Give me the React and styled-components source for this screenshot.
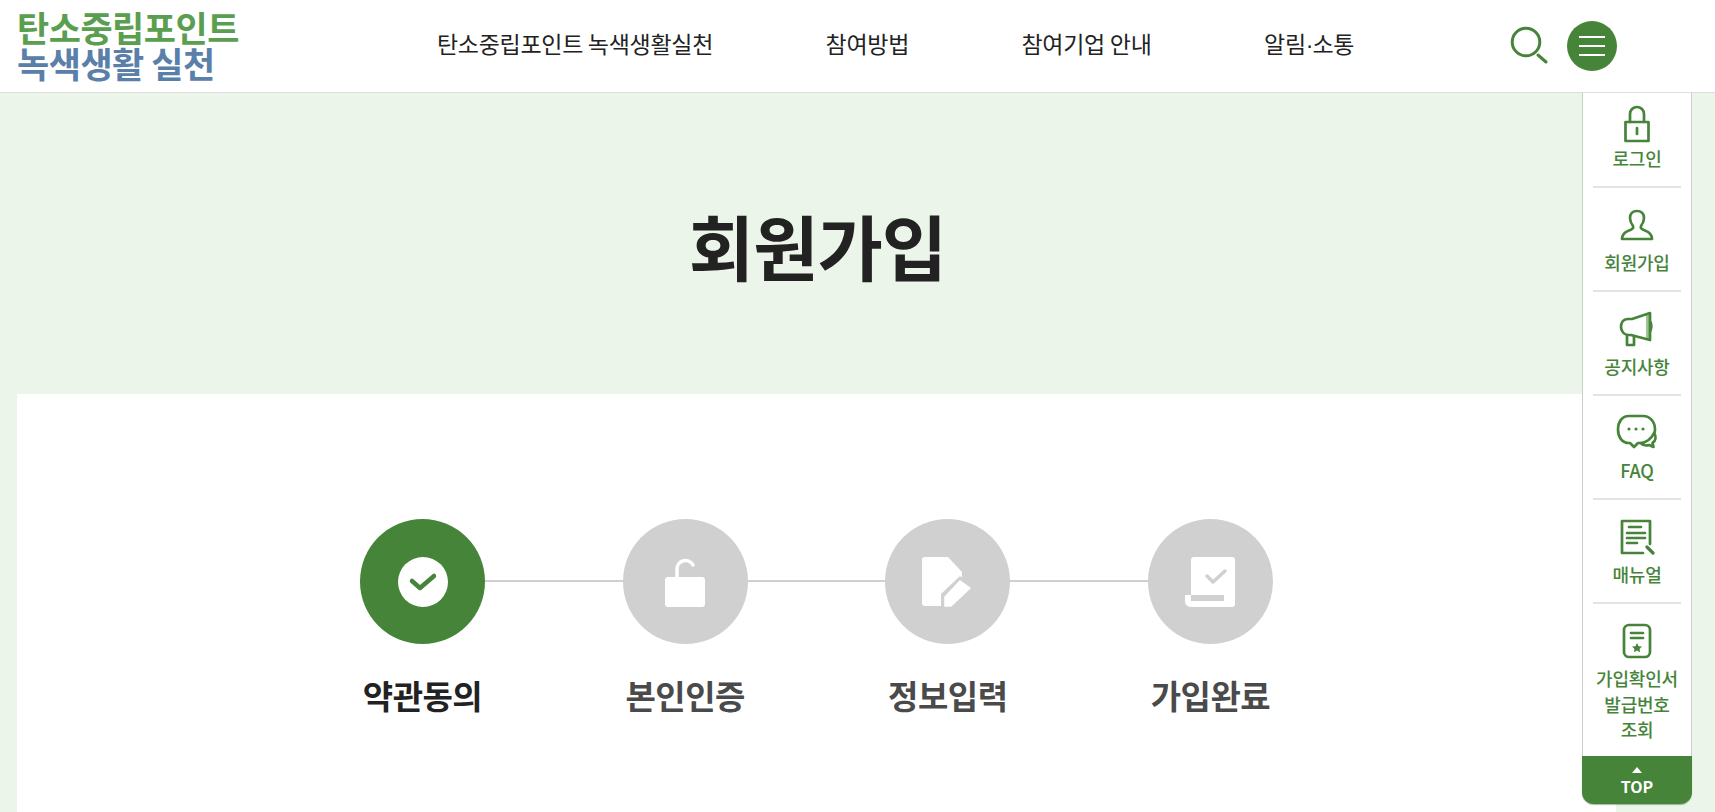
import React from "react";
import styled, { createGlobalStyle } from "styled-components";

const GREEN = "#46843a";
const GREY = "#d0d0d0";

const GlobalStyle = createGlobalStyle`
  html, body {
    margin: 0;
    padding: 0;
    height: 812px;
    overflow: hidden;
    background: #fff;
    font-family: "Noto Sans CJK KR", "Noto Sans", sans-serif;
  }
  * { box-sizing: border-box; }
`;

const Page = styled.div`
  position: relative;
  width: 1715px;
  height: 812px;
  overflow: hidden;
  background: #ebf5e9;
`;

const Header = styled.header`
  display: flex;
  align-items: center;
  height: 93px;
  padding: 0 98px 0 17px;
  background: #fff;
  border-bottom: 1px solid #dcdedb;
`;

const Logo = styled.div`
  width: 420px;
  margin-top: -2px;
  font-size: 35px;
  font-weight: 700;
  line-height: 36px;
  letter-spacing: -0.5px;
`;

const LogoLine = styled.div`
  color: ${props => props.color};
  white-space: nowrap;
`;

const Nav = styled.nav`
  display: flex;
  gap: 112.5px;
  margin-top: -6px;
  font-size: 23px;
  color: #222;
  letter-spacing: -0.3px;
  white-space: nowrap;
`;

const NavDot = styled.span`
  font-family: "Liberation Sans", sans-serif;
  letter-spacing: -1px;
`;

const Tools = styled.div`
  display: flex;
  align-items: center;
  margin-left: auto;
  gap: 19px;
`;

const SearchButton = styled.div`
  display: flex;
  width: 38px;
  height: 40px;
`;

const MenuButton = styled.div`
  display: flex;
  flex-direction: column;
  align-items: center;
  justify-content: center;
  gap: 7px;
  width: 50px;
  height: 50px;
  border-radius: 50%;
  background: ${GREEN};
`;

const MenuLine = styled.span`
  width: 26px;
  height: 2px;
  background: #fff;
`;

const Hero = styled.section`
  display: flex;
  justify-content: center;
  align-items: center;
  height: 301px;
  padding: 0 80px 0 0;
`;

const Title = styled.h1`
  margin: 0;
  font-size: 71px;
  font-weight: 700;
  letter-spacing: -1px;
  color: #222;
`;

const Card = styled.main`
  width: 1599px;
  height: 500px;
  margin-left: 17px;
  padding-top: 125px;
  background: #fff;
`;

const Stepper = styled.div`
  display: flex;
  justify-content: center;
  align-items: flex-start;
`;

const Step = styled.div`
  display: flex;
  flex-direction: column;
  align-items: center;
  width: 125px;
`;

const Circle = styled.div`
  display: flex;
  align-items: center;
  justify-content: center;
  width: 125px;
  height: 125px;
  border-radius: 50%;
  background: ${props => props.active ? GREEN : GREY};
`;

const Connector = styled.div`
  width: 137.67px;
  height: 2px;
  margin-top: 61px;
  background: ${GREY};
`;

const StepLabel = styled.div`
  margin-top: 28px;
  font-size: 33px;
  font-weight: 700;
  line-height: 46px;
  letter-spacing: -0.5px;
  white-space: nowrap;
  color: ${props => props.active ? "#222" : "#4a4a4a"};
`;

const Side = styled.aside`
  position: absolute;
  top: 93px;
  left: 1582px;
  width: 110px;
  height: 711px;
  display: flex;
  flex-direction: column;
  background: #fff;
  border: solid #c9d0c8;
  border-width: 0 1px;
  border-radius: 0 0 12px 12px;
`;

const SideItem = styled.a`
  display: flex;
  flex-direction: column;
  align-items: center;
  height: ${props => props.h}px;
  margin: 0 10px;
  padding-top: ${props => props.pt}px;
  border-bottom: ${props => props.last ? "none" : "2px solid #e2e4e2"};
  color: ${GREEN};
`;

const SideIcon = styled.div`
  display: flex;
  align-items: center;
  justify-content: center;
  height: 38px;
`;

const SideLabel = styled.div`
  margin-top: ${props => props.gap}px;
  font-size: 18px;
  font-weight: 500;
  line-height: 25.5px;
  letter-spacing: -0.2px;
  text-align: center;
  white-space: nowrap;
`;

const TopButton = styled.div`
  display: flex;
  flex-direction: column;
  align-items: center;
  height: 48px;
  margin: auto -1px 0;
  padding-top: 11px;
  background: ${GREEN};
  color: #fff;
  font-size: 16px;
  font-weight: 700;
  line-height: 20px;
  border-radius: 0 0 12px 12px;
  box-shadow: 0 1px 1px rgba(40, 80, 30, 0.4);
`;

const TopArrow = styled.span`
  width: 0;
  height: 0;
  margin-bottom: 3px;
  border: solid transparent;
  border-width: 0 5px 6px;
  border-bottom-color: #fff;
`;

const line = { fill: "none", stroke: GREEN, strokeWidth: 2.7, strokeLinecap: "round", strokeLinejoin: "round" };

const SearchIcon = () => (
  <svg width="38" height="40" viewBox="0 0 38 40">
    <circle cx="16" cy="16" r="13.8" fill="none" stroke={GREEN} strokeWidth="3" />
    <path d="M28 29l8 7" fill="none" stroke={GREEN} strokeWidth="3" strokeLinecap="round" />
  </svg>
);

const LockIcon = () => (
  <svg width="28" height="38" viewBox="0 0 28 38">
    <g {...line}>
      <rect x="2.5" y="17" width="23" height="19" />
      <path d="M7 17V9a7 7 0 0 1 14 0v8" />
      <path d="M14 23v6" />
    </g>
  </svg>
);

const PersonIcon = () => (
  <svg width="34" height="32" viewBox="0 0 34 32">
    <path {...line} d="M17 2c-4.500 0-7 3-7 7 0 3 1.500 6 3 8 1 2-1 3.500-4 4.500C5 23 2 25 2 30h30c0-5-3-7-7-8.500-3-1-5-2.500-4-4.500 1.500-2 3-5 3-8 0-4-2.500-7-7-7z" />
  </svg>
);

const MegaphoneIcon = () => (
  <svg width="36" height="36" viewBox="0 0 36 36">
    <path d="M27 4v23l4 2V2z" fill="#9cc391" />
    <path d="M31 9c3.500 1 3.500 11 0 13z" fill={GREEN} />
    <g {...line}>
      <path d="M31 2L13 8H9C4 8 2 12 2 16s3 8 7 8h3l19 5z" />
      <path d="M8 24v10h7V25" />
    </g>
  </svg>
);

const ChatIcon = () => (
  <svg width="42" height="38" viewBox="0 0 42 38">
    <g {...line}>
      <path d="M38 20c.8-1.500 1-3 1-4.500C39 8 34 2 27 2H13C6 2 2 8 2 15.500S6 29 13 29h1l4 4 4-4h2" />
      <path d="M38 19c2.500 3 2 8-1.500 10l1 4-4.500-2c-3 1-6.500 0-8.500-2 5 0 11-4 13.500-10z" />
    </g>
    <g fill={GREEN}>
      <circle cx="13" cy="15" r="1.600" />
      <circle cx="20" cy="15" r="1.600" />
      <circle cx="27" cy="15" r="1.600" />
    </g>
  </svg>
);

const ManualIcon = () => (
  <svg width="36" height="36" viewBox="0 0 36 36">
    <g {...line}>
      <path d="M31 25V2H3v32h21" />
      <path d="M28 28l6 6" strokeWidth="3.200" />
      <path d="M10 8h12M8 14h18M8 19h18M8 24h10" />
    </g>
  </svg>
);

const ConfirmIcon = () => (
  <svg width="30" height="36" viewBox="0 0 30 36">
    <g {...line}>
      <rect x="2" y="2" width="26" height="32" rx="5" />
      <path d="M9 10h12M9 15h12" />
    </g>
    <path d="M15 20l1.600 3.200 3.400.4-2.500 2.300.7 3.400-3.200-1.700-3.200 1.700.7-3.400-2.500-2.300 3.400-.4z" fill={GREEN} />
  </svg>
);

const CheckStep = () => (
  <svg width="50" height="50" viewBox="0 0 50 50">
    <circle cx="25" cy="25" r="25" fill="#fff" />
    <path d="M14 24l8 7 14-12" fill="none" stroke={GREEN} strokeWidth="4.500" strokeLinecap="round" strokeLinejoin="round" />
  </svg>
);

const OpenLockStep = () => (
  <svg width="44" height="52" viewBox="0 0 44 52">
    <rect x="2" y="21" width="40" height="30" rx="3" fill="#fff" />
    <path d="M14 22v-9a8.500 8.500 0 0 1 16-4" fill="none" stroke="#fff" strokeWidth="3.500" strokeLinecap="round" />
  </svg>
);

const DocStep = () => (
  <svg width="54" height="52" viewBox="0 0 54 52">
    <path d="M4 1h23l14 15v16L22 50H4a3 3 0 0 1-3-3V4a3 3 0 0 1 3-3z" fill="#fff" />
    <path d="M20 52V38L39 20l15 12-21 20z" fill={GREY} />
    <path d="M24 50v-9L39 25l10 7-19 18z" fill="#fff" stroke="#fff" strokeWidth="1.500" strokeLinejoin="round" />
  </svg>
);

const ScrollStep = () => (
  <svg width="50" height="52" viewBox="0 0 50 52">
    <path d="M9 1h38a3 3 0 0 1 3 3v44a3 3 0 0 1-3 3H7c-4 0-7-2-7-6v-6h6V4a3 3 0 0 1 3-3z" fill="#fff" />
    <path d="M6 39h33v6H6z" fill={GREY} />
    <path d="M22 20l6 6 12-11" fill="none" stroke={GREY} strokeWidth="3.500" strokeLinecap="round" strokeLinejoin="round" />
  </svg>
);

const steps = [
  { label: "약관동의", icon: <CheckStep />, active: true },
  { label: "본인인증", icon: <OpenLockStep /> },
  { label: "정보입력", icon: <DocStep /> },
  { label: "가입완료", icon: <ScrollStep /> },
];

const sideLinks = [
  { label: ["로그인"], icon: <LockIcon />, h: 95, pt: 12, gap: 3 },
  { label: ["회원가입"], icon: <PersonIcon />, h: 104, pt: 18, gap: 6 },
  { label: ["공지사항"], icon: <MegaphoneIcon />, h: 104, pt: 18, gap: 6 },
  { label: ["FAQ"], icon: <ChatIcon />, h: 104, pt: 18, gap: 6 },
  { label: ["매뉴얼"], icon: <ManualIcon />, h: 104, pt: 18, gap: 6 },
  { label: ["가입확인서", "발급번호", "조회"], icon: <ConfirmIcon />, h: 150, pt: 18, gap: 6, last: true },
];

export default function App() {
  return (
    <Page>
      <GlobalStyle />
      <Header>
        <Logo>
          <LogoLine color="#5a9e50">탄소중립포인트</LogoLine>
          <LogoLine color="#5a80aa">녹색생활 실천</LogoLine>
        </Logo>
        <Nav>
          <span>탄소중립포인트 녹색생활실천</span>
          <span>참여방법</span>
          <span>참여기업 안내</span>
          <span>알림<NavDot>·</NavDot>소통</span>
        </Nav>
        <Tools>
          <SearchButton><SearchIcon /></SearchButton>
          <MenuButton>
            <MenuLine />
            <MenuLine />
            <MenuLine />
          </MenuButton>
        </Tools>
      </Header>
      <Hero>
        <Title>회원가입</Title>
      </Hero>
      <Card>
        <Stepper>
          {steps.map((step, i) => (
            <React.Fragment key={step.label}>
              {i > 0 && <Connector />}
              <Step>
                <Circle active={step.active}>{step.icon}</Circle>
                <StepLabel active={step.active}>{step.label}</StepLabel>
              </Step>
            </React.Fragment>
          ))}
        </Stepper>
      </Card>
      <Side>
        {sideLinks.map(link => (
          <SideItem key={link.label[0]} h={link.h} pt={link.pt} last={link.last}>
            <SideIcon>{link.icon}</SideIcon>
            <SideLabel gap={link.gap}>
              {link.label.map(text => <div key={text}>{text}</div>)}
            </SideLabel>
          </SideItem>
        ))}
        <TopButton>
          <TopArrow />
          TOP
        </TopButton>
      </Side>
    </Page>
  );
}
